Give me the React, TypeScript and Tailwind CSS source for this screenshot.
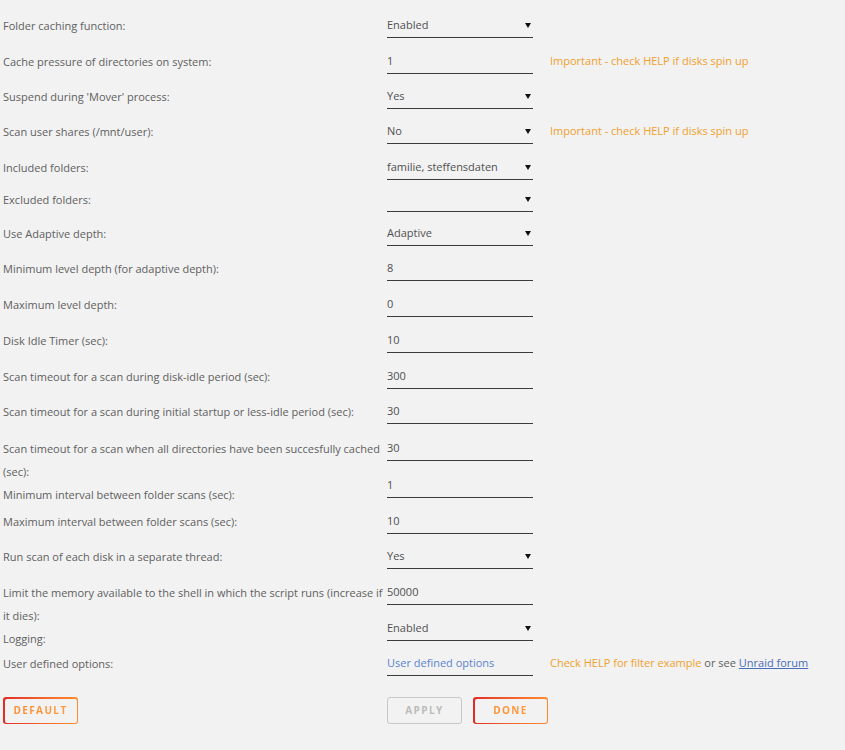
import { ReactNode } from 'react';

type Row = {
  label: string;
  label2?: string;
  value: string;
  kind: 'select' | 'text' | 'link';
  hint?: ReactNode;
  h: number;
  shift?: number;
};

const spinHint = <span className="text-[#f0a02c]">Important - check HELP if disks spin up</span>;

const rows: Row[] = [
  { label: 'Folder caching function:', value: 'Enabled', kind: 'select', h: 36 },
  { label: 'Cache pressure of directories on system:', value: '1', kind: 'text', hint: spinHint, h: 35 },
  { label: "Suspend during 'Mover' process:", value: 'Yes', kind: 'select', h: 35 },
  { label: 'Scan user shares (/mnt/user):', value: 'No', kind: 'select', hint: spinHint, h: 36 },
  { label: 'Included folders:', value: 'familie, steffensdaten', kind: 'select', h: 32 },
  { label: 'Excluded folders:', value: '', kind: 'select', h: 34 },
  { label: 'Use Adaptive depth:', value: 'Adaptive', kind: 'select', h: 35 },
  { label: 'Minimum level depth (for adaptive depth):', value: '8', kind: 'text', h: 36 },
  { label: 'Maximum level depth:', value: '0', kind: 'text', h: 36 },
  { label: 'Disk Idle Timer (sec):', value: '10', kind: 'text', h: 36 },
  { label: 'Scan timeout for a scan during disk-idle period (sec):', value: '300', kind: 'text', h: 35 },
  { label: 'Scan timeout for a scan during initial startup or less-idle period (sec):', value: '30', kind: 'text', h: 37 },
  {
    label: 'Scan timeout for a scan when all directories have been succesfully cached',
    label2: '(sec):',
    value: '30',
    kind: 'text',
    h: 37,
  },
  { label: 'Minimum interval between folder scans (sec):', value: '1', kind: 'text', h: 36, shift: 9 },
  { label: 'Maximum interval between folder scans (sec):', value: '10', kind: 'text', h: 35 },
  { label: 'Run scan of each disk in a separate thread:', value: 'Yes', kind: 'select', h: 36 },
  {
    label: 'Limit the memory available to the shell in which the script runs (increase if',
    label2: 'it dies):',
    value: '50000',
    kind: 'text',
    h: 36,
  },
  { label: 'Logging:', value: 'Enabled', kind: 'select', h: 35, shift: 10 },
  {
    label: 'User defined options:',
    value: 'User defined options',
    kind: 'link',
    h: 36,
    hint: (
      <>
        <span className="text-[#f0a02c]">Check HELP for filter example</span>
        <span className="text-[#606060]"> or see </span>
        <span className="text-[#486dba] underline">Unraid forum</span>
      </>
    ),
  },
];

const Field = ({ row }: { row: Row }) => (
  <div className="relative w-[146px] h-[25px] border-b border-[#3a3a3a] leading-[24px] whitespace-nowrap">
    <span className={row.kind === 'link' ? 'text-[#5b83cf]' : 'text-[#505050]'}>{row.value}</span>
    {row.kind === 'select' && (
      <svg className="absolute right-[2px] top-[10px]" width="6" height="5" viewBox="0 0 6 5">
        <polygon points="0,0 6,0 3,5" fill="#111" />
      </svg>
    )}
  </div>
);

const GradientButton = ({ text }: { text: string }) => (
  <div className="rounded-[3px] p-[1.5px] bg-gradient-to-r from-[#e22828] to-[#ff8c2f] w-[75px] h-[27px]">
    <div className="rounded-[2px] bg-[#f2f2f2] w-full h-full flex items-center justify-center">
      <span className="text-[10px] font-bold tracking-[1.4px] bg-gradient-to-r from-[#ff8c2f] to-[#ff9a3c] bg-clip-text text-transparent">
        {text}
      </span>
    </div>
  </div>
);

export default function App() {
  return (
    <div className="min-h-[750px] bg-[#f2f2f2] pt-[13px] font-['Open_Sans',sans-serif] text-[11px] text-[#606060]">
      {rows.map((row, i) => (
        <div key={i} className="flex items-start" style={{ height: row.h }}>
          <div className="w-[387px] shrink-0 pl-[3px] leading-[23px] whitespace-nowrap" style={{ paddingTop: 0.5 + (row.shift ?? 0) }}>
            <div>{row.label}</div>
            {row.label2 && <div>{row.label2}</div>}
          </div>
          <Field row={row} />
          {row.hint && <div className="ml-[17px] leading-[24px] whitespace-nowrap">{row.hint}</div>}
        </div>
      ))}
      <div className="flex mt-[10px]">
        <div className="w-[387px] pl-[3px]">
          <GradientButton text="DEFAULT" />
        </div>
        <div className="flex gap-[11px]">
          <div className="w-[75px] h-[27px] rounded-[3px] border-[1.5px] border-[#c8c8c8] flex items-center justify-center">
            <span className="text-[10px] font-bold tracking-[1.4px] text-[#bbbbbb]">APPLY</span>
          </div>
          <GradientButton text="DONE" />
        </div>
      </div>
    </div>
  );
}
